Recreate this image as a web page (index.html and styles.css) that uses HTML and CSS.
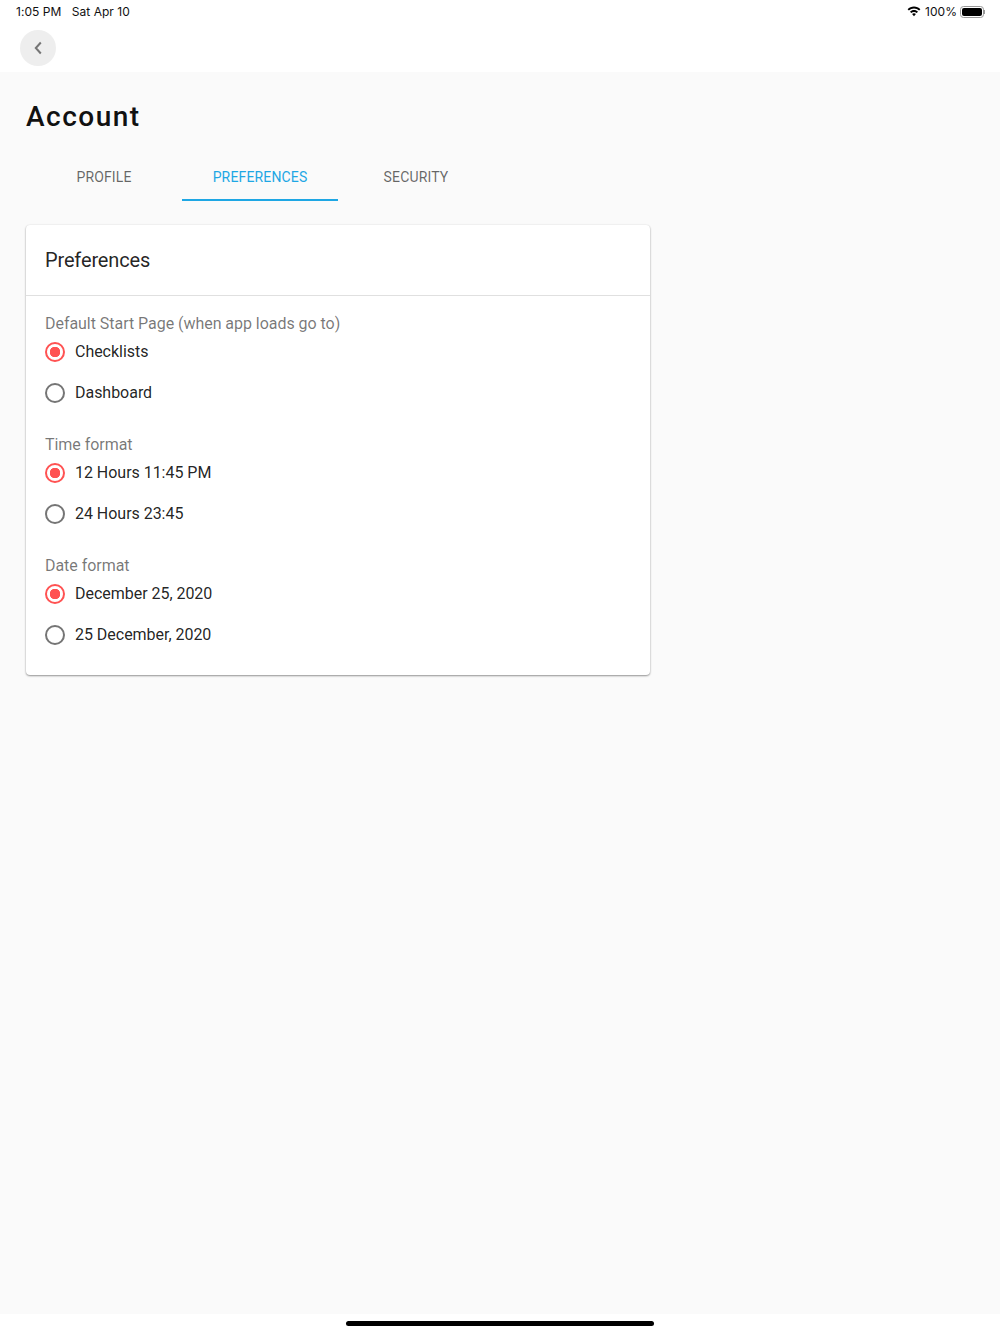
FILE: index.html
```html
<!DOCTYPE html>
<html lang="en">
<head>
<meta charset="utf-8">
<title>Account</title>
<link rel="stylesheet" href="styles.css">
</head>
<body>
<div class="app">
  <header class="topbar">
    <div class="status">
      <div class="status-left"><span>1:05 PM</span><span>Sat Apr 10</span></div>
      <div class="status-right">
        <svg class="wifi" width="14" height="11" viewBox="0 0 14 11"><path d="M7 .6C4.500.6 2.300 1.600.6 3.200l1.300 1.400C3.300 3.300 5.100 2.500 7 2.500s3.700.8 5.100 2.100l1.300-1.400C11.700 1.600 9.500.6 7 .6z"/><path d="M7 4.100c-1.500 0-2.900.6-4 1.600l1.300 1.400C5 6.400 6 6 7 6s2 .4 2.700 1.100L11 5.700C9.900 4.700 8.500 4.100 7 4.100z"/><path d="M7 7.300c-.7 0-1.400.3-1.900.8L7 10.300l1.900-2.200c-.5-.5-1.200-.8-1.900-.8z"/></svg>
        <span>100%</span>
        <span class="battery"><span class="battery-fill"></span></span>
        <span class="battery-cap"></span>
      </div>
    </div>
    <div class="nav">
      <button class="back" type="button" aria-label="Back">
        <svg width="10" height="14" viewBox="0 0 10 14"><path d="M7.800 1.500 2.800 7l5 5.500" fill="none" stroke="#757575" stroke-width="2"/></svg>
      </button>
    </div>
  </header>
  <main class="content">
    <h1 class="title">Account</h1>
    <nav class="tabs">
      <a class="tab">PROFILE</a>
      <a class="tab tab-active">PREFERENCES</a>
      <a class="tab">SECURITY</a>
    </nav>
    <section class="card">
      <h2 class="card-title">Preferences</h2>
      <div class="card-body">
        <div class="group">
          <div class="legend">Default Start Page (when app loads go to)</div>
          <label class="option"><span class="radio radio-on"></span><span>Checklists</span></label>
          <label class="option"><span class="radio"></span><span>Dashboard</span></label>
        </div>
        <div class="group">
          <div class="legend">Time format</div>
          <label class="option"><span class="radio radio-on"></span><span>12 Hours 11:45 PM</span></label>
          <label class="option"><span class="radio"></span><span>24 Hours 23:45</span></label>
        </div>
        <div class="group">
          <div class="legend">Date format</div>
          <label class="option"><span class="radio radio-on"></span><span>December 25, 2020</span></label>
          <label class="option"><span class="radio"></span><span>25 December, 2020</span></label>
        </div>
      </div>
    </section>
  </main>
  <footer class="home"><span class="home-bar"></span></footer>
</div>
</body>
</html>
```
FILE: styles.css
```css
* { box-sizing: border-box; }
html, body { margin: 0; height: 100%; }
body { font-family: Roboto, "Noto Sans", sans-serif; background: #fafafa; color: rgba(0,0,0,.87); }
.app { height: 1334px; display: flex; flex-direction: column; overflow: hidden; }

.topbar { height: 72px; background: #fff; flex: none; }
.status { height: 23px; padding: 0 15px 0 16px; display: flex; justify-content: space-between; align-items: center; font-family: Inter, Roboto, sans-serif; font-size: 12px; letter-spacing: .03px; color: #111; }
.status-left { display: flex; gap: 10.500px; }
.status-right { display: flex; align-items: center; }
.wifi { margin-right: 4px; fill: #000; }
.battery { width: 24px; height: 12px; border: 1px solid #999; border-radius: 3.500px; padding: 1px; margin-left: 3px; display: flex; }
.battery-fill { flex: 1; background: #000; border-radius: 2px; }
.battery-cap { width: 1px; height: 4px; background: #999; }
.nav { padding: 7px 0 0 20px; }
.back { width: 36px; height: 36px; border: 0; padding: 0; border-radius: 50%; background: #eee; display: flex; align-items: center; justify-content: center; }

.content { flex: 1; padding: 0 26px; }
.title { margin: 28px 0 0; font-size: 28px; line-height: 34px; font-weight: 500; letter-spacing: 1.500px; color: #111; }
.tabs { display: flex; margin-top: 19px; height: 48px; }
.tab { width: 156px; display: flex; align-items: center; justify-content: center; font-size: 14px; letter-spacing: .15px; color: rgba(0,0,0,.6); }
.tab-active { color: #1ea7e4; padding-top: 2px; border-bottom: 2px solid #1ea7e4; }

.card { width: 624px; height: 450px; margin-top: 24px; background: #fff; border-radius: 4px; box-shadow: 0 1px 2px rgba(0,0,0,.4), 0 0 2px rgba(0,0,0,.08); }
.card-title { margin: 0; height: 71px; padding: 0 19px; display: flex; align-items: center; font-size: 20px; font-weight: 400; letter-spacing: -.15px; border-bottom: 1px solid #e0e0e0; }
.card-body { padding: 18px 19px 0; display: flex; flex-direction: column; gap: 22px; }
.legend { font-size: 16px; line-height: 20px; color: rgba(0,0,0,.54); letter-spacing: -.04px; }
.option { height: 41px; display: flex; align-items: center; gap: 10px; font-size: 16px; letter-spacing: -.03px; }
.group .legend + .option { margin-top: -3px; }
.radio { width: 20px; height: 20px; border-radius: 50%; border: 2px solid #757575; flex: none; margin-top: 1px; }
.radio-on { border-color: #ff5252; background: radial-gradient(circle, #ff5252 0 5px, transparent 5.500px); }

.home { height: 20px; flex: none; background: #fff; display: flex; justify-content: center; padding-top: 7px; }
.home-bar { width: 308px; height: 5px; background: #000; border-radius: 3px; }
```
